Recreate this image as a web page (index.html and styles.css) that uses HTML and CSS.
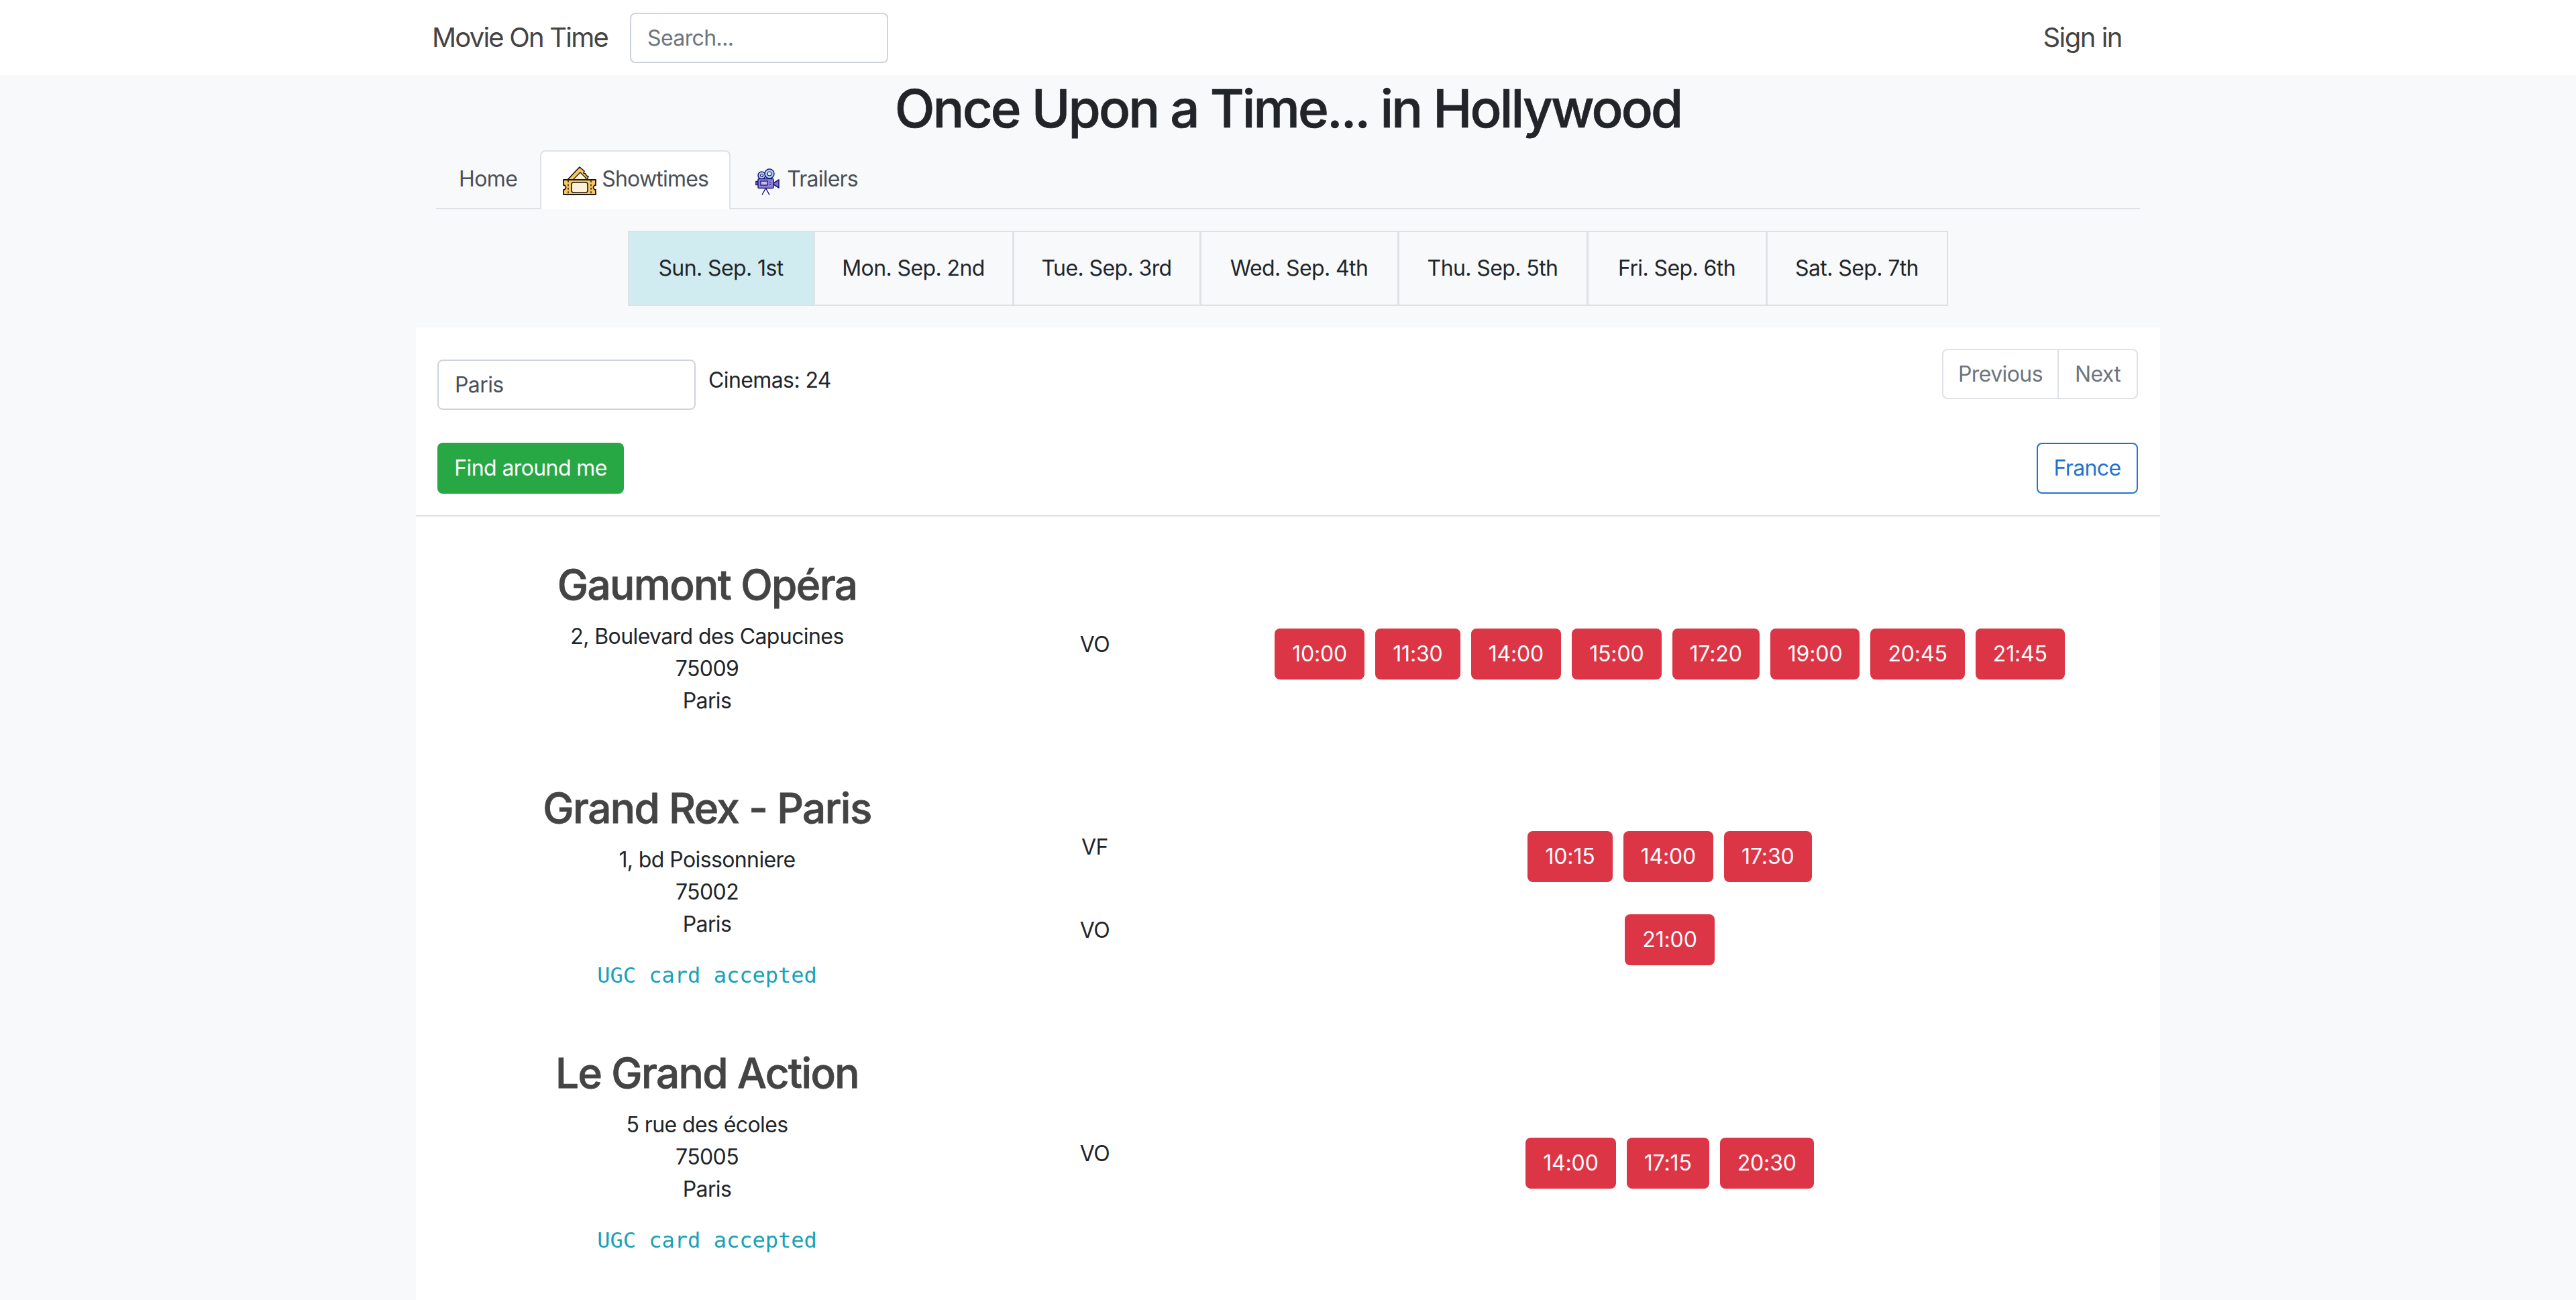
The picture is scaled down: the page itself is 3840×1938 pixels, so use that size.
FILE: index.html
```html
<!DOCTYPE html>
<html lang="en">
<head>
<meta charset="utf-8">
<title>Once Upon a Time... in Hollywood</title>
<link rel="stylesheet" href="styles.css">
</head>
<body>
<header class="navbar">
  <div class="navbar-inner">
    <a class="brand">Movie On Time</a>
    <input class="field search" type="text" placeholder="Search...">
    <a class="signin">Sign in</a>
  </div>
</header>
<main class="page">
  <h1 class="title">Once Upon a Time... in Hollywood</h1>
  <nav class="tabs">
    <a class="tab">Home</a>
    <a class="tab tab-active">
      <svg class="icon-ticket" viewBox="0 0 50 44" aria-hidden="true">
        <path d="M7 21 25 2l7 6-1 3 3 1 1 3 3 1-2 5z" fill="#f8c866" stroke="#1b1408" stroke-width="1.6" stroke-linejoin="round"/>
        <path d="M15 21 26 10l9 9-2 2z" fill="#fdf1d8" stroke="#1b1408" stroke-width="1.2" stroke-linejoin="round"/>
        <path d="M1 21h48v8a3.5 3.5 0 0 0 0 7v7H1v-7a3.5 3.5 0 0 0 0-7z" fill="#f8c866" stroke="#1b1408" stroke-width="1.8" stroke-linejoin="round"/>
        <rect x="13" y="25" width="24" height="15" rx="3" fill="#fdf1d8" stroke="#1b1408" stroke-width="1.6"/>
        <path d="M8 22v20M42 22v20" fill="none" stroke="#1b1408" stroke-width="1.4" stroke-dasharray="3 2.4"/>
      </svg>
      <span class="tab-label">Showtimes</span>
    </a>
    <a class="tab tab-trailers">
      <svg class="icon-camera" viewBox="0 0 36 40" aria-hidden="true">
        <circle cx="9.5" cy="10.5" r="5.5" fill="#a9d3f5" stroke="#1d1a78" stroke-width="1.5"/>
        <circle cx="9.5" cy="10.5" r="2" fill="#e8f4fd" stroke="#1d1a78" stroke-width="1.2"/>
        <circle cx="21" cy="8" r="7" fill="#a9d3f5" stroke="#1d1a78" stroke-width="1.5"/>
        <circle cx="21" cy="8" r="3" fill="#e8f4fd" stroke="#1d1a78" stroke-width="1.2"/>
        <path d="M0.8 19.5h3v5h-3z" fill="#7e70cc" stroke="#1d1a78" stroke-width="1.3"/>
        <path d="M27 22l8-5v12l-8-5z" fill="#7e70cc" stroke="#1d1a78" stroke-width="1.5" stroke-linejoin="round"/>
        <rect x="4" y="15.5" width="23" height="14" rx="1.5" fill="#8d80d8" stroke="#1d1a78" stroke-width="1.5"/>
        <rect x="8" y="19" width="10" height="6" fill="#c5c0ee" stroke="#1d1a78" stroke-width="1.3"/>
        <path d="M22 20v1.5M22 23.5V25" stroke="#1d1a78" stroke-width="1.5"/>
        <path d="M15.5 29.5 10 39.5M15.5 29.5 21 39.5" fill="none" stroke="#1d1a78" stroke-width="1.5"/>
      </svg>
      <span class="tab-label">Trailers</span>
    </a>
  </nav>
  <ul class="days">
    <li class="day day-active">Sun. Sep. 1st</li>
    <li class="day">Mon. Sep. 2nd</li>
    <li class="day">Tue. Sep. 3rd</li>
    <li class="day">Wed. Sep. 4th</li>
    <li class="day">Thu. Sep. 5th</li>
    <li class="day">Fri. Sep. 6th</li>
    <li class="day">Sat. Sep. 7th</li>
  </ul>
  <section class="card">
    <div class="toolbar">
      <div class="toolbar-row">
        <div class="city">
          <input class="field city-input" type="text" value="Paris">
          <span class="count">Cinemas: 24</span>
        </div>
        <div class="pager">
          <a class="pager-item pager-prev">Previous</a>
          <a class="pager-item pager-next">Next</a>
        </div>
      </div>
      <div class="toolbar-row toolbar-row-second">
        <a class="btn btn-green">Find around me</a>
        <a class="btn btn-outline">France</a>
      </div>
    </div>
    <div class="cinemas">
      <article class="cinema cinema-plain">
        <div class="info">
          <h2 class="name">Gaumont Opéra</h2>
          <p class="addr">2, Boulevard des Capucines</p>
          <p class="addr">75009</p>
          <p class="addr">Paris</p>
        </div>
        <div class="versions">
          <div class="version">
            <span class="lang">VO</span>
            <div class="times">
              <a class="btn btn-time">10:00</a><a class="btn btn-time">11:30</a><a class="btn btn-time">14:00</a><a class="btn btn-time">15:00</a><a class="btn btn-time">17:20</a><a class="btn btn-time">19:00</a><a class="btn btn-time">20:45</a><a class="btn btn-time">21:45</a>
            </div>
          </div>
        </div>
      </article>
      <article class="cinema">
        <div class="info">
          <h2 class="name">Grand Rex - Paris</h2>
          <p class="addr">1, bd Poissonniere</p>
          <p class="addr">75002</p>
          <p class="addr">Paris</p>
          <code class="ugc">UGC card accepted</code>
        </div>
        <div class="versions">
          <div class="version">
            <span class="lang">VF</span>
            <div class="times">
              <a class="btn btn-time">10:15</a><a class="btn btn-time">14:00</a><a class="btn btn-time">17:30</a>
            </div>
          </div>
          <div class="version">
            <span class="lang">VO</span>
            <div class="times">
              <a class="btn btn-time">21:00</a>
            </div>
          </div>
        </div>
      </article>
      <article class="cinema">
        <div class="info">
          <h2 class="name">Le Grand Action</h2>
          <p class="addr">5 rue des écoles</p>
          <p class="addr">75005</p>
          <p class="addr">Paris</p>
          <code class="ugc">UGC card accepted</code>
        </div>
        <div class="versions">
          <div class="version">
            <span class="lang">VO</span>
            <div class="times">
              <a class="btn btn-time">14:00</a><a class="btn btn-time">17:15</a><a class="btn btn-time">20:30</a>
            </div>
          </div>
        </div>
      </article>
    </div>
  </section>
</main>
</body>
</html>
```
FILE: styles.css
```css
* { box-sizing: border-box; }
html, body { margin: 0; height: 100%; }
body {
  background: #f8f9fa;
  color: #212529;
  font-family: Inter, "Liberation Sans", sans-serif;
  font-size: 32px;
  line-height: 48px;
  letter-spacing: -0.6px;
  overflow: hidden;
}
.navbar { background: #fff; height: 112px; }
.navbar-inner {
  width: 2600px;
  height: 100%;
  margin: 0 auto;
  padding: 0 57px 0 24px;
  display: flex;
  align-items: center;
}
.brand, .signin { font-size: 40px; color: #444; letter-spacing: -1.8px; }
.signin { letter-spacing: -1.5px; }
.brand { margin-right: 33px; }
.signin { margin-left: auto; }
.field {
  height: 75px;
  width: 385px;
  border: 2px solid #ced4da;
  border-radius: 8px;
  background: #fff;
  color: #495057;
  padding: 0 24px;
  font: inherit;
  letter-spacing: inherit;
  outline: none;
}
.field::placeholder { color: #6c757d; opacity: 1; }
.page { width: 2600px; margin: 0 auto; }
.title {
  margin: 2px 0 14px;
  font-size: 78px;
  line-height: 96px;
  font-weight: 500;
  text-align: center;
  letter-spacing: -2.85px;
  -webkit-text-stroke: 0.7px currentColor;
}
.tabs {
  margin: 0 30px;
  height: 88px;
  display: flex;
  border-bottom: 2px solid #dee2e6;
}
.tab {
  height: 88px;
  padding: 17px 32px 0;
  border: 2px solid transparent;
  border-bottom: 0;
  border-radius: 8px 8px 0 0;
  color: #495057;
  display: flex;
  align-items: flex-start;
}
.tab-active { background: #fff; border-color: #dee2e6; width: 284px; }
.tab-trailers { padding-left: 35px; }
.tab-label { display: block; letter-spacing: -0.8px; }
.icon-ticket { width: 50px; height: 44px; margin: 4px 8px 0 0; flex: none; }
.icon-camera { width: 36px; height: 40px; margin: 8px 11px 0 0; flex: none; }
.days {
  list-style: none;
  margin: 32px 0;
  padding: 0;
  display: grid;
  grid-template-columns: 277px 297px 279px 295px 282px 267px 270px;
  justify-content: center;
}
.day {
  height: 112px;
  border: 2px solid #dee2e6;
  margin-left: -1px;
  display: flex;
  align-items: center;
  justify-content: center;
}
.day-active { background: #d1ecf1; }
.card { background: #fff; height: 1450px; }
.toolbar { padding: 32px 33px 32px 32px; border-bottom: 2px solid #dee2e6; height: 282px; }
.toolbar-row { display: flex; justify-content: space-between; align-items: flex-start; }
.toolbar-row-second { margin-top: 49px; }
.city { display: flex; align-items: flex-start; margin-top: 16px; }
.city-input { width: 385px; }
.count { margin: 7px 0 0 19px; }
.pager { display: flex; height: 75px; border: 2px solid #dee2e6; border-radius: 8px; }
.pager-item { color: #6c757d; display: flex; align-items: center; justify-content: center; }
.pager-prev { width: 172px; border-right: 2px solid #dee2e6; }
.pager-next { width: 116px; }
.btn {
  display: inline-flex;
  align-items: center;
  justify-content: center;
  height: 76px;
  padding: 0 26px;
  border-radius: 8px;
}
.btn-green { background: #28a745; color: #fff; width: 278px; padding: 0; }
.btn-outline { border: 2px solid #1f73d1; color: #1f73d1; width: 151px; padding: 0; }
.btn-time { background: #dc3545; color: #fff; flex: none; padding: 0 26px; letter-spacing: -0.15px; }
.cinemas { padding: 63px 18px 0 0; }
.cinema {
  display: grid;
  grid-template-columns: 868px 1fr;
  align-items: center;
  margin-bottom: 83px;
}
.cinema-plain { margin-bottom: 97px; }
.info { text-align: center; }
.name {
  margin: 0 0 15px;
  font-size: 62px;
  line-height: 77px;
  font-weight: 500;
  color: #444;
  letter-spacing: -1.6px;
  -webkit-text-stroke: 0.8px currentColor;
}
.addr { margin: 0; }
.ugc {
  display: block;
  margin-top: 28px;
  font-family: "DejaVu Sans Mono", "Liberation Mono", monospace;
  font-size: 32px;
  line-height: 48px;
  color: #17a2b8;
  letter-spacing: 0;
}
.versions { padding-top: 34px; display: grid; row-gap: 48px; }
.cinema-plain .versions { padding-top: 48px; }
.version { display: grid; grid-template-columns: 288px 1fr; align-items: start; }
.lang { text-align: center; }
.times { display: flex; justify-content: center; gap: 16px; }
```
